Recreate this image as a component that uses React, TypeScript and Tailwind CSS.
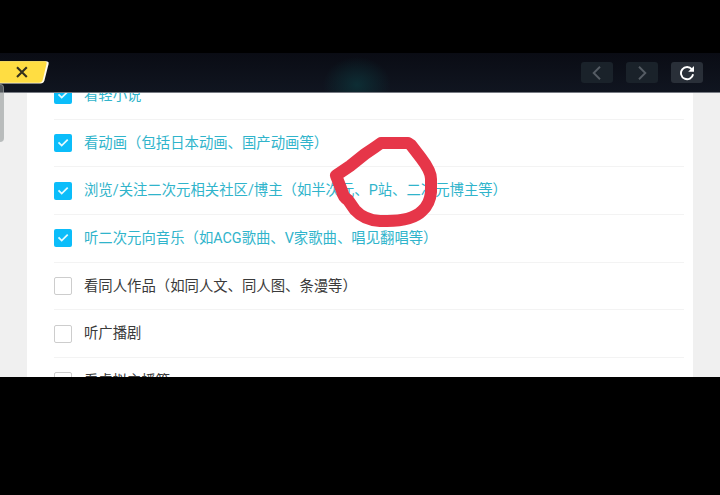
import React from "react";

interface OptionItem {
  label: string;
  checked?: boolean;
}

const OPTIONS: OptionItem[] = [
  { label: "看轻小说", checked: true },
  { label: "看动画（包括日本动画、国产动画等）", checked: true },
  {
    label: "浏览/关注二次元相关社区/博主（如半次元、P站、二次元博主等）",
    checked: true,
  },
  { label: "听二次元向音乐（如ACG歌曲、V家歌曲、唱见翻唱等）", checked: true },
  { label: "看同人作品（如同人文、同人图、条漫等）" },
  { label: "听广播剧" },
  { label: "看虚拟主播等" },
];

const Checkbox: React.FC<{ checked?: boolean }> = ({ checked }) => {
  if (!checked) {
    return (
      <span className="h-[18px] w-[18px] shrink-0 rounded-[2px] border border-[#cdcdcd] bg-white" />
    );
  }
  return (
    <span className="flex h-[18px] w-[18px] shrink-0 items-center justify-center rounded-[2px] bg-[#0bbdfa]">
      <svg viewBox="0 0 18 18" className="h-[18px] w-[18px]" fill="none">
        <path d="M4.5 8.4 7.7 11.6 13.7 5.7" stroke="#e4faff" strokeWidth="1.8" />
      </svg>
    </span>
  );
};

const OptionRow: React.FC<{ item: OptionItem }> = ({ item }) => {
  return (
    <li className="flex h-[47.7px] shrink-0 items-center border-b border-[#f3f3f3]">
      <Checkbox checked={item.checked} />
      <span
        className={`ml-3 whitespace-nowrap pt-[1.4px] text-[14.37px] leading-5 ${
          item.checked ? "text-[#30b4cb]" : "text-[#3a3a3a]"
        }`}
      >
        {item.label}
      </span>
    </li>
  );
};

const TopBar = () => {
  return (
    <header className="flex h-10 shrink-0 items-center justify-between border-b border-[#777b83] bg-[radial-gradient(ellipse_34px_28px_at_357px_32px,#0d2d34,transparent),linear-gradient(to_bottom,#0a0c14,#101520)]">
      <button className="relative h-6 w-[50px]" aria-label="close">
        <svg viewBox="0 0 50 24" className="h-6 w-[50px]" fill="none">
          <path d="M0 .2H46Q49.3.2 48.6 3L44.5 19.3Q43.6 22.6 40.5 22.6H0Z" fill="#fffbea" />
          <path d="M0 .2H44.5Q47.2.2 46.5 3L42.8 18.8Q42 21.8 39 21.8H0Z" fill="#ffdd42" />
          <path d="m17 6.2 9.8 9.8m0-9.8L17 16" stroke="#35301c" strokeWidth="2.1" />
        </svg>
      </button>
      <div className="flex gap-[13px] pr-[17px]">
        <button className="flex h-[21px] w-8 items-center justify-center rounded-[3px] bg-[#1a222a]">
          <svg viewBox="0 0 16 16" className="h-4 w-4" fill="none">
            <path d="M11 1.8 4.7 8l6.3 6.2" stroke="#555c64" strokeWidth="1.9" />
          </svg>
        </button>
        <button className="flex h-[21px] w-8 items-center justify-center rounded-[3px] bg-[#1a222a]">
          <svg viewBox="0 0 16 16" className="h-4 w-4" fill="none">
            <path d="M5 1.8 11.3 8 5 14.2" stroke="#555c64" strokeWidth="1.9" />
          </svg>
        </button>
        <button className="flex h-[21px] w-8 items-center justify-center rounded-[3px] bg-[#292f38]">
          <svg viewBox="0 0 16 16" className="h-4 w-4" fill="none">
            <path d="M12.9 4.4A6.1 6.1 0 1 0 14.1 9.3" stroke="#fff" strokeWidth="1.9" />
            <path d="M15 1V6.8H9.2Z" fill="#fff" />
          </svg>
        </button>
      </div>
    </header>
  );
};

// hand-drawn circle around the highlighted words
const Marker = () => {
  return (
    <svg
      viewBox="0 0 112 96"
      className="pointer-events-none absolute left-[328px] top-[134px] h-24 w-28"
      fill="none"
    >
      <path
        d="M8 41.5 22 32 37 20Q49 12 53 9H80L83 11L93 24Q103 37 103 45V58Q102 70 94 77Q84 87 59 87H52Q36 86 27 76L20 66Q15 63 14 57Z"
        stroke="#e63649"
        strokeWidth="12"
        strokeLinejoin="round"
      />
    </svg>
  );
};

const App = () => {
  return (
    <div className="relative flex h-[495px] w-[720px] flex-col overflow-hidden bg-black pt-[53px] font-[Roboto,'Noto_Sans_CJK_SC',sans-serif]">
      <TopBar />
      <main className="h-[283.5px] shrink-0 overflow-hidden bg-[#f0f0f0] px-[27px]">
        <div className="h-full overflow-hidden bg-white pl-[27px] pr-[9px]">
          <ul className="-mt-[21.2px] flex flex-col">
            {OPTIONS.map((item, index) => (
              <OptionRow key={index} item={item} />
            ))}
          </ul>
        </div>
      </main>
      <span className="absolute -left-2 top-[84px] h-[58px] w-3 rounded-[4px] border border-[#b9bdbd]/40 bg-[#8c9292]/55" />
      <Marker />
    </div>
  );
};

export default App;
